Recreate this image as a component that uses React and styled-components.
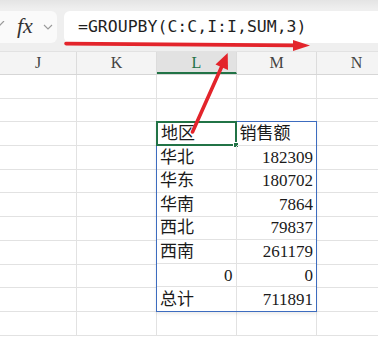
import React from "react";
import styled, { createGlobalStyle } from "styled-components";

const GlobalStyle = createGlobalStyle`
  html, body {
    margin: 0;
    padding: 0;
    background: #ffffff;
    overflow: hidden;
  }
`;

const columns = ["J", "K", "L", "M", "N"];
const ROWS = 11;

const data = [
  { region: "地区", amount: "销售额", head: true },
  { region: "华北", amount: "182309" },
  { region: "华东", amount: "180702" },
  { region: "华南", amount: "7864" },
  { region: "西北", amount: "79837" },
  { region: "西南", amount: "261179" },
  { region: "0", amount: "0", numRegion: true },
  { region: "总计", amount: "711891" },
];

const App = () => {
  const blanks = columns.length * ROWS - data.length * 2;
  return (
    <>
      <GlobalStyle />
      <Page>
        <FormulaBar>
          <FxBox>
            <svg width="8" height="12" viewBox="0 0 8 12">
              <polyline
                points="-2,9 1,4 5,0"
                fill="none"
                stroke="#9a9a9a"
                strokeWidth="1.2"
              />
            </svg>
            <Fx>fx</Fx>
            <svg width="10" height="7" viewBox="0 0 10 7">
              <polyline
                points="1,1 5,5 9,1"
                fill="none"
                stroke="#9a9a9a"
                strokeWidth="1.1"
              />
            </svg>
          </FxBox>
          <FormulaInput>=GROUPBY(C:C,I:I,SUM,3)</FormulaInput>
        </FormulaBar>

        <HeaderRow>
          {columns.map((c) => (
            <ColHeader key={c} $active={c === "L"}>
              {c}
            </ColHeader>
          ))}
        </HeaderRow>

        <Sheet>
          <Table>
            {data.map((row, i) => (
              <React.Fragment key={i}>
                <Cell $selected={row.head} $num={row.numRegion}>
                  {row.region}
                  {row.head && <Handle />}
                </Cell>
                <Cell $num={!row.head} $last>
                  {row.amount}
                </Cell>
              </React.Fragment>
            ))}
          </Table>
          {Array.from({ length: blanks }).map((_, i) => (
            <Blank key={i} />
          ))}
        </Sheet>

        <Arrows width="378" height="337" viewBox="0 0 378 337">
          <line
            x1="66"
            y1="43.6"
            x2="296"
            y2="45.4"
            stroke="#e3242b"
            strokeWidth="3.6"
            strokeLinecap="round"
          />
          <polygon points="293,40 310,45.5 293,51" fill="#e3242b" />
          <line
            x1="192.5"
            y1="132"
            x2="222"
            y2="66"
            stroke="#e3242b"
            strokeWidth="3.6"
            strokeLinecap="round"
          />
          <polygon points="215.5,64.5 227.7,53 228,70" fill="#e3242b" />
        </Arrows>
      </Page>
    </>
  );
};

export default App;

const Page = styled.div`
  position: relative;
  width: 378px;
  height: 337px;
  overflow: hidden;
  background: #ffffff;
`;

const FormulaBar = styled.div`
  display: flex;
  align-items: flex-start;
  gap: 7px;
  height: 52px;
  box-sizing: border-box;
  padding-top: 11px;
  background: linear-gradient(#e4e4e4 0px, #efefef 9px, #efefef 100%);
  border-bottom: 1px solid #e2e2e2;
`;

const FxBox = styled.div`
  display: flex;
  align-items: center;
  gap: 10px;
  width: 65px;
  height: 32px;
  margin-left: -8px;
  padding-left: 7px;
  box-sizing: border-box;
  background: #fafafa;
  border-radius: 6px;
`;

const Fx = styled.span`
  font-family: "Liberation Serif", serif;
  font-style: italic;
  font-size: 22px;
  color: #333333;
  line-height: 1;
  margin-top: -2px;
`;

const FormulaInput = styled.div`
  flex: 1;
  height: 32px;
  margin-right: -20px;
  padding-left: 14px;
  box-sizing: border-box;
  background: #ffffff;
  border-radius: 6px;
  font-family: "DejaVu Sans Mono", monospace;
  font-size: 16.5px;
  line-height: 32px;
  color: #1f1f1f;
  white-space: nowrap;
`;

const HeaderRow = styled.div`
  display: grid;
  grid-template-columns: 77px repeat(4, 80px);
  height: 22px;
  background: #f4f4f4;
  border-bottom: 1px solid #d6d6d6;
`;

const ColHeader = styled.div`
  display: flex;
  align-items: center;
  justify-content: center;
  box-sizing: border-box;
  border-right: 1px solid #dcdcdc;
  font-family: "Liberation Serif", serif;
  font-size: 16px;
  color: ${(p) => (p.$active ? "#217346" : "#444444")};
  background: ${(p) => (p.$active ? "#e2e2e2" : "transparent")};
  border-bottom: ${(p) => (p.$active ? "2px solid #217346" : "none")};
  padding-top: ${(p) => (p.$active ? "2px" : "0")};
`;

const Sheet = styled.div`
  display: grid;
  grid-template-columns: 77px repeat(4, 80px);
  grid-auto-rows: 23.7px;
`;

const Blank = styled.div`
  box-sizing: border-box;
  border-right: 1px solid #e2e2e2;
  border-bottom: 1px solid #e2e2e2;
`;

const Table = styled.div`
  grid-column: 3 / 5;
  grid-row: 3 / 11;
  display: grid;
  grid-template-columns: 1fr 1fr;
  grid-template-rows: repeat(8, minmax(0, 1fr));
  margin: -1px 0 0 -1px;
  border: 1px solid #3d6cbf;
  box-shadow: 0 2px 3px rgba(0, 0, 0, 0.08);
  position: relative;
  z-index: 1;
  background: #ffffff;
`;

const Cell = styled.div`
  position: relative;
  display: flex;
  align-items: center;
  justify-content: ${(p) => (p.$num ? "flex-end" : "flex-start")};
  box-sizing: border-box;
  min-height: 0;
  padding: 0 3px;
  line-height: 1;
  border-right: ${(p) => (p.$last ? "none" : "1px solid #e2e2e2")};
  border-bottom: 1px solid #e2e2e2;
  font-family: ${(p) =>
    p.$num
      ? '"Liberation Serif", serif'
      : '"Liberation Serif", "Noto Sans CJK SC", sans-serif'};
  font-size: 17px;
  font-weight: 400;
  color: #1a1a1a;
  &:nth-last-child(-n + 2) {
    border-bottom: none;
  }
  ${(p) =>
    p.$selected &&
    `
    border: 2px solid #217346;
    margin: -1px 0 0 -1px;
    padding-left: 3px;
  `}
`;

const Handle = styled.span`
  position: absolute;
  right: -4px;
  bottom: -4px;
  width: 6px;
  height: 6px;
  background: #217346;
  border: 1px solid #ffffff;
  box-sizing: border-box;
`;

const Arrows = styled.svg`
  position: absolute;
  left: 0;
  top: 0;
  pointer-events: none;
  z-index: 5;
`;
